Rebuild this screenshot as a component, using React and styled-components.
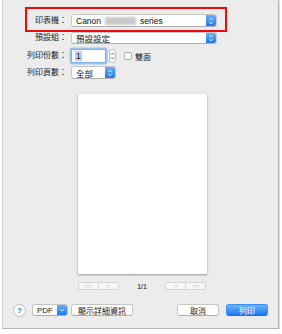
import React from "react";
import styled, { createGlobalStyle } from "styled-components";

const GlobalStyle = createGlobalStyle`
  html, body {
    margin: 0;
    padding: 0;
    background: #ffffff;
  }
  body {
    font-family: "Liberation Sans", "Noto Sans CJK TC", sans-serif;
    color: #222;
  }
`;

const Window = styled.div`
  box-sizing: border-box;
  margin-left: 2px;
  width: 277px;
  height: 329px;
  background: #ececec;
  border-left: 1px solid #d6d6d6;
  border-right: 1px solid #b4b4b4;
  border-bottom: 1px solid #b4b4b4;
  box-shadow: 1px 1px 0 #dedede;
  display: flex;
  flex-direction: column;
`;

const Form = styled.div`
  display: flex;
  flex-direction: column;
  padding-top: 14px;
`;

const Row = styled.div`
  position: relative;
  display: flex;
  align-items: center;
  height: ${(p) => p.$h}px;
  margin-top: ${(p) => p.$mt || 0}px;
`;

const Label = styled.div`
  width: 64px;
  flex-shrink: 0;
  text-align: right;
  font-size: 8px;
  line-height: 1;
  color: #222;
  margin-right: 4px;
  white-space: nowrap;
`;

const Highlight = styled.div`
  position: absolute;
  left: 22px;
  top: -7px;
  width: 202px;
  height: 25px;
  box-sizing: border-box;
  border: 2px solid #ee0a0a;
  pointer-events: none;
`;

const Popup = styled.div`
  box-sizing: border-box;
  width: ${(p) => p.$w}px;
  height: ${(p) => p.$h || 13}px;
  background: #fff;
  border: 1px solid #c6c6c6;
  border-bottom-color: #b0b0b0;
  border-radius: 3px;
  display: flex;
  align-items: stretch;
  overflow: hidden;
`;

const PopupText = styled.div`
  flex: 1;
  display: flex;
  align-items: center;
  padding-left: 4px;
  font-size: 8.5px;
  color: #111;
  gap: 3px;
  white-space: nowrap;
`;

const Blur = styled.span`
  display: inline-block;
  width: 31px;
  height: 8px;
  background: #c9c9c9;
  filter: blur(1px);
  margin: 0 1px;
`;

const ArrowBox = styled.div`
  width: 10px;
  align-self: stretch;
  background: linear-gradient(#6aaef8, #1f78ea);
  display: flex;
  align-items: center;
  justify-content: center;
`;

const CopiesField = styled.div`
  box-sizing: border-box;
  width: 35px;
  height: 14px;
  background: #fff;
  border: 1px solid #7faee8;
  box-shadow: 0 0 0 1.5px #9cc3f4;
  border-radius: 1px;
  display: flex;
  align-items: center;
  padding-left: 3px;
  font-size: 8.5px;
`;

const Selected = styled.span`
  background: #b3d3fa;
  padding: 0 1px;
  line-height: 10px;
`;

const Stepper = styled.div`
  box-sizing: border-box;
  width: 7px;
  height: 14px;
  margin-left: 3px;
  background: #fff;
  border: 1px solid #c2c2c2;
  border-radius: 3px;
  display: flex;
  align-items: center;
  justify-content: center;
`;

const Check = styled.div`
  box-sizing: border-box;
  width: 8px;
  height: 8px;
  margin-left: 8px;
  background: #fff;
  border: 1px solid #a9a9a9;
  border-radius: 2px;
`;

const CheckText = styled.span`
  font-size: 8px;
  margin-left: 3px;
`;

const Preview = styled.div`
  display: flex;
  flex-direction: column;
  align-items: center;
  margin-top: 15px;
  padding-left: 3px;
`;

const Paper = styled.div`
  width: 129px;
  height: 180px;
  background: #fff;
  box-shadow: 0 1px 2px rgba(0, 0, 0, 0.35), 0 0 1px rgba(0, 0, 0, 0.12);
`;

const Nav = styled.div`
  width: 129px;
  margin-top: 8px;
  height: 8px;
  display: flex;
  align-items: center;
  justify-content: space-between;
`;

const NavGroup = styled.div`
  box-sizing: border-box;
  width: 41px;
  height: 8px;
  display: flex;
  background: #f6f6f6;
  border: 1px solid #d2d2d2;
  border-radius: 2px;
`;

const NavSeg = styled.div`
  flex: 1;
  display: flex;
  align-items: center;
  justify-content: center;
  font-size: 6px;
  color: #bbb;
  line-height: 1;
  & + & {
    border-left: 1px solid #d8d8d8;
  }
`;

const PageNum = styled.span`
  font-size: 7px;
  font-weight: bold;
  color: #555;
`;

const Bottom = styled.div`
  display: flex;
  align-items: center;
  height: 14px;
  margin-top: 13px;
  padding: 0 10px 0 10px;
`;

const Help = styled.div`
  box-sizing: border-box;
  width: 13px;
  height: 13px;
  border-radius: 50%;
  background: #fff;
  border: 1px solid #bdbdbd;
  display: flex;
  align-items: center;
  justify-content: center;
  font-size: 8px;
  font-weight: bold;
  color: #2a7fe8;
`;

const Button = styled.div`
  box-sizing: border-box;
  width: ${(p) => p.$w}px;
  height: 12px;
  margin-left: ${(p) => p.$ml || 0}px;
  border-radius: 3px;
  display: flex;
  align-items: center;
  justify-content: center;
  font-size: 8px;
  white-space: nowrap;
  overflow: hidden;
  background: ${(p) => (p.$primary ? "linear-gradient(#6db4fb, #1b7af0)" : "#fff")};
  color: ${(p) => (p.$primary ? "#fff" : "#222")};
  border: 1px solid ${(p) => (p.$primary ? "#3b8ff0" : "#c6c6c6")};
  border-bottom-color: ${(p) => (p.$primary ? "#1a6fd8" : "#adadad")};
`;

const PdfLabel = styled.div`
  flex: 1;
  text-align: center;
  font-size: 8px;
`;

const Spacer = styled.div`
  flex: 1;
`;

const UpDown = () => (
  <svg width="6" height="8" viewBox="0 0 6 8">
    <path d="M1.2 3 L3 1.3 L4.8 3 M1.2 5 L3 6.7 L4.8 5" fill="none" stroke="#fff" strokeWidth="0.9" />
  </svg>
);

const SmallUpDown = () => (
  <svg width="5" height="10" viewBox="0 0 5 10">
    <path d="M1 3.6 L2.5 2 L4 3.6 M1 6.4 L2.5 8 L4 6.4" fill="none" stroke="#555" strokeWidth="0.8" />
  </svg>
);

const Down = () => (
  <svg width="6" height="6" viewBox="0 0 6 6">
    <path d="M1.2 2.2 L3 4 L4.8 2.2" fill="none" stroke="#fff" strokeWidth="1" />
  </svg>
);

export default function App() {
  return (
    <>
      <GlobalStyle />
      <Window>
        <Form>
          <Row $h={13}>
            <Highlight />
            <Label>印表機：</Label>
            <Popup $w={146}>
              <PopupText>
                Canon <Blur /> series
              </PopupText>
              <ArrowBox>
                <UpDown />
              </ArrowBox>
            </Popup>
          </Row>
          <Row $h={12} $mt={5}>
            <Label>預設組：</Label>
            <Popup $w={146} $h={12}>
              <PopupText>預設設定</PopupText>
              <ArrowBox>
                <UpDown />
              </ArrowBox>
            </Popup>
          </Row>
          <Row $h={14} $mt={5}>
            <Label>列印份數：</Label>
            <CopiesField>
              <Selected>1</Selected>
            </CopiesField>
            <Stepper>
              <SmallUpDown />
            </Stepper>
            <Check />
            <CheckText>雙面</CheckText>
          </Row>
          <Row $h={13} $mt={3}>
            <Label>列印頁數：</Label>
            <Popup $w={45}>
              <PopupText>全部</PopupText>
              <ArrowBox>
                <UpDown />
              </ArrowBox>
            </Popup>
          </Row>
        </Form>

        <Preview>
          <Paper />
          <Nav>
            <NavGroup>
              <NavSeg>&lt;&lt;</NavSeg>
              <NavSeg>&lt;</NavSeg>
            </NavGroup>
            <PageNum>1/1</PageNum>
            <NavGroup>
              <NavSeg>&gt;</NavSeg>
              <NavSeg>&gt;&gt;</NavSeg>
            </NavGroup>
          </Nav>
        </Preview>

        <Bottom>
          <Help>?</Help>
          <Button $w={36} $ml={6}>
            <PdfLabel>PDF</PdfLabel>
            <ArrowBox>
              <Down />
            </ArrowBox>
          </Button>
          <Button $w={62} $ml={3}>顯示詳細資訊</Button>
          <Spacer />
          <Button $w={42}>取消</Button>
          <Button $w={42} $ml={7} $primary>
            列印
          </Button>
        </Bottom>
      </Window>
    </>
  );
}
